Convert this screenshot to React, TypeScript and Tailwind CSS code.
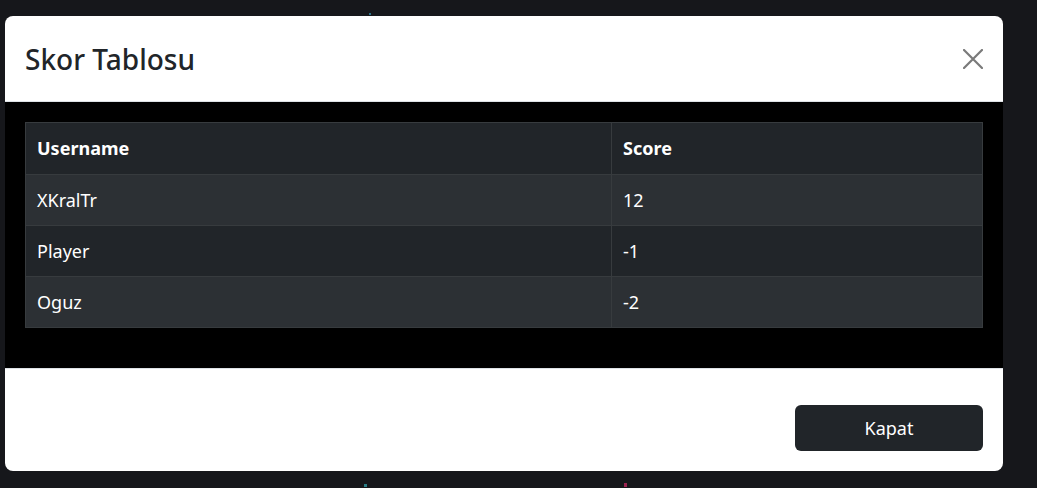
const scores = [
  { username: "XKralTr", score: 12 },
  { username: "Player", score: -1 },
  { username: "Oguz", score: -2 },
]

export default function App() {
  return (
    <div
      className="relative h-[488px] w-[1037px] overflow-hidden bg-[#16171b] pt-4 pl-[5px]"
      style={{ fontFamily: '"Noto Sans", "Open Sans", sans-serif' }}
    >
      {/* bits of the page behind the modal */}
      <span className="absolute left-[369px] top-[13px] h-[2px] w-[2px] bg-[#2b6f86]" />
      <span className="absolute left-[364px] top-[484px] h-[3px] w-[3px] bg-[#2a7d86]" />
      <span className="absolute left-[624px] top-[483px] h-[4px] w-[3px] bg-[#9b2350]" />

      <div className="flex h-[455px] w-[998px] flex-col overflow-hidden rounded-lg bg-white">
        {/* header */}
        <div className="flex h-[86px] items-center justify-between border-b border-[#dee2e6] px-5">
          <h5 className="text-[28px] font-medium text-[#212529]">Skor Tablosu</h5>
          <button className="text-[#7a7a7a]">
            <svg width="20" height="20" viewBox="0 0 20 20" stroke="currentColor" strokeWidth="2.2" strokeLinecap="round">
              <path d="M1 1 19 19M19 1 1 19" />
            </svg>
          </button>
        </div>

        {/* body */}
        <div className="h-[266px] bg-black p-5">
          <table className="w-full border-collapse border border-[#4a4e52] text-[18px] text-white">
            <thead>
              <tr className="h-[52px] bg-[#212529]">
                <th className="w-[586px] border border-[#373b3e] px-[11px] text-left font-bold">Username</th>
                <th className="border border-[#373b3e] px-[11px] text-left font-bold">Score</th>
              </tr>
            </thead>
            <tbody>
              {scores.map((row, i) => (
                <tr
                  key={row.username}
                  className={i % 2 === 0 ? "h-[51px] bg-[#2c3034]" : "h-[51px] bg-[#212529]"}
                >
                  <td className="border border-[#373b3e] px-[11px]">{row.username}</td>
                  <td className="border border-[#373b3e] px-[11px]">{row.score}</td>
                </tr>
              ))}
            </tbody>
          </table>
        </div>

        {/* footer */}
        <div className="flex flex-1 items-end justify-end border-t border-[#dee2e6] px-5 pb-5">
          <button className="h-[46px] w-[188px] rounded-md bg-[#212529] text-[18px] text-white">
            Kapat
          </button>
        </div>
      </div>
    </div>
  )
}
